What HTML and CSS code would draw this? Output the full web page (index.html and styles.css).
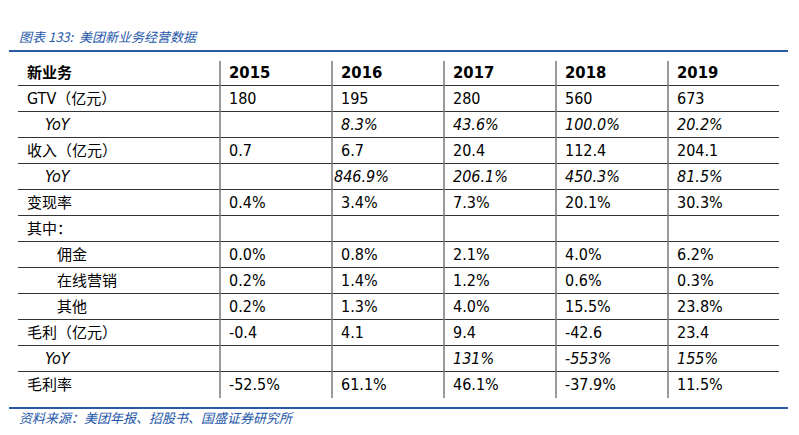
FILE: index.html
```html
<!DOCTYPE html>
<html lang="zh">
<head>
<meta charset="utf-8">
<title>美团新业务经营数据</title>
<link rel="stylesheet" href="styles.css">
</head>
<body>
<div class="page">
  <div class="caption">图表 133:&nbsp; 美团新业务经营数据</div>
  <div class="rule"></div>
  <table class="data">
    <colgroup>
      <col class="c-label"><col class="c-num"><col class="c-num"><col class="c-num"><col class="c-num"><col class="c-num">
    </colgroup>
    <thead>
      <tr><th class="label">新业务</th><th>2015</th><th>2016</th><th>2017</th><th>2018</th><th>2019</th></tr>
    </thead>
    <tbody>
      <tr><td class="label"><span class="lat">GTV</span>（亿元）</td><td>180</td><td>195</td><td>280</td><td>560</td><td>673</td></tr>
      <tr class="yoy"><td class="label"><span class="lat">YoY</span></td><td></td><td>8.3%</td><td>43.6%</td><td>100.0%</td><td>20.2%</td></tr>
      <tr><td class="label">收入（亿元）</td><td>0.7</td><td>6.7</td><td>20.4</td><td>112.4</td><td>204.1</td></tr>
      <tr class="yoy"><td class="label"><span class="lat">YoY</span></td><td></td><td class="tight">846.9%</td><td>206.1%</td><td>450.3%</td><td>81.5%</td></tr>
      <tr><td class="label">变现率</td><td>0.4%</td><td>3.4%</td><td>7.3%</td><td>20.1%</td><td>30.3%</td></tr>
      <tr><td class="label">其中：</td><td></td><td></td><td></td><td></td><td></td></tr>
      <tr class="sub"><td class="label">佣金</td><td>0.0%</td><td>0.8%</td><td>2.1%</td><td>4.0%</td><td>6.2%</td></tr>
      <tr class="sub"><td class="label">在线营销</td><td>0.2%</td><td>1.4%</td><td>1.2%</td><td>0.6%</td><td>0.3%</td></tr>
      <tr class="sub"><td class="label">其他</td><td>0.2%</td><td>1.3%</td><td>4.0%</td><td>15.5%</td><td>23.8%</td></tr>
      <tr><td class="label">毛利（亿元）</td><td>-0.4</td><td>4.1</td><td>9.4</td><td>-42.6</td><td>23.4</td></tr>
      <tr class="yoy"><td class="label"><span class="lat">YoY</span></td><td></td><td></td><td>131%</td><td>-553%</td><td>155%</td></tr>
      <tr class="last"><td class="label">毛利率</td><td>-52.5%</td><td>61.1%</td><td>46.1%</td><td>-37.9%</td><td>11.5%</td></tr>
    </tbody>
  </table>
  <div class="rule bottom"></div>
  <div class="source">资料来源：美团年报、招股书、国盛证券研究所</div>
</div>
</body>
</html>
```

FILE: styles.css
```css
html, body {
  margin: 0;
  padding: 0;
  background: #ffffff;
}

body {
  font-family: "DejaVu Sans Condensed", "DejaVu Sans", "Noto Sans CJK SC", sans-serif;
  font-stretch: condensed;
  color: #000000;
}

.page {
  width: 779px;
  padding: 29px 0 0 9px;
}

.caption,
.source {
  font-family: "Noto Sans CJK SC", sans-serif;
  font-size: 13px;
  line-height: 16px;
  font-style: italic;
  color: #2457a8;
  padding-left: 10px;
}

.caption {
  height: 16px;
  margin-bottom: 5px;
}

.rule {
  height: 2px;
  background: #2a5aa6;
}

.rule.bottom {
  margin-top: 9px;
}

.source {
  margin-top: 1px;
}

.data {
  margin: 9px 0 0 9px;
  width: 761px;
  table-layout: fixed;
  border-collapse: separate;
  border-spacing: 0;
  font-size: 16px;
}

.c-label { width: 201px; }
.c-num { width: 112px; }

.data th,
.data td {
  box-sizing: border-box;
  height: 26px;
  padding: 0 0 0 8px;
  text-align: left;
  vertical-align: middle;
  white-space: nowrap;
  border-bottom: 1px solid #333333;
  border-left: 2px solid #9a9a9a;
  line-height: 20px;
}

.data th {
  height: 25px;
  font-weight: bold;
  font-size: 16.5px;
}

.data .label {
  border-left: none;
  padding-left: 9px;
  font-size: 15px;
}

.data th.label {
  font-weight: bold;
  font-size: 15px;
}

.data .lat {
  font-size: 16px;
}

.yoy td {
  font-style: italic;
}

.yoy td.label {
  padding-left: 27px;
}

.sub td.label {
  padding-left: 39px;
}

.data td.tight {
  padding-left: 1px;
}

.last td {
  border-bottom: none;
}
```
